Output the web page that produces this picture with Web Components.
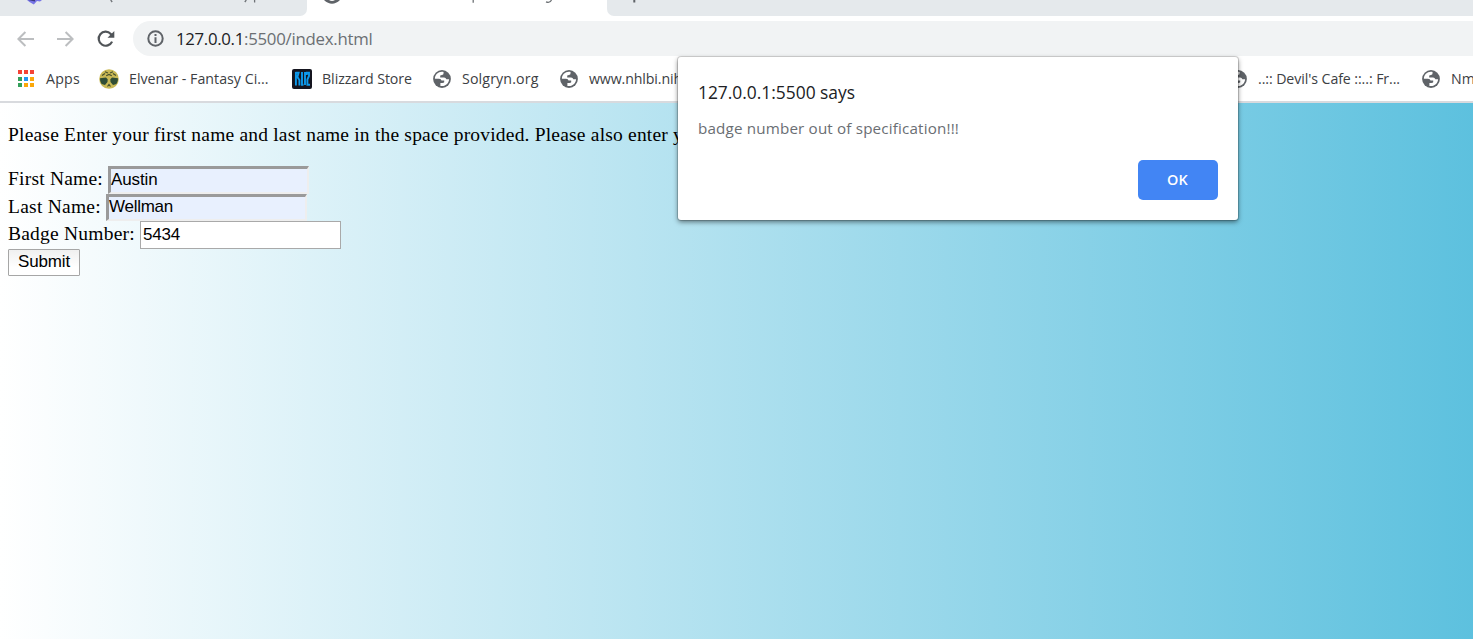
<!DOCTYPE html>
<html lang="en">
<head>
<meta charset="utf-8">
<title>Badge form</title>
<style>
html,body{margin:0;height:100%;overflow:hidden}
body{font-family:"Open Sans","Noto Sans",sans-serif;color:#3c4043}
</style>
</head>
<body>
<browser-window></browser-window>
<script>
const define = (name, html, after) => customElements.define(name, class extends HTMLElement {
  connectedCallback() {
    if (this.shadowRoot) return;
    this.attachShadow({mode: 'open'}).innerHTML = html;
    if (after) after(this, this.shadowRoot);
  }
});

/* Text run that spreads its letters to occupy the given width. */
define('fit-text', `<style>:host{display:inline-block;white-space:pre;flex:none}span{display:inline-block}</style><span><slot></slot></span>`, (el, root) => {
  const span = root.querySelector('span');
  const want = parseFloat(el.getAttribute('width'));
  const n = el.textContent.length;
  const have = span.getBoundingClientRect().width;
  if (want && have) span.style.letterSpacing = ((want - have) / n) + 'px';
});

define('globe-icon', `<style>:host{display:block;width:18px;height:18px;flex:none}svg{display:block}</style>
<svg width="18" height="18" viewBox="0 0 18 18"><circle cx="9" cy="9" r="8.9" fill="#5f6368"/><path d="M10.6 1.9 C6 .8 1.9 4.3 1.9 8.7 L6 8.7 Q8.3 8.8 8.5 10.4 L11.2 10.4 L11.2 12.2 Q11 13 9.2 13 L7.4 13 L7.4 15.9 C12.2 17 16 13.3 16.1 9.3 L13.4 9.3 Q12.8 7.5 10.8 7.6 L7.2 7.6 L7.2 5.8 Q7.3 4.9 9.1 4.9 L10.4 4.3 Z" fill="#fff"/></svg>`);

define('apps-icon', `<style>:host{display:block;width:17px;height:18px}svg{display:block}</style>
<svg width="17" height="18" viewBox="0 0 17 18"><g fill="#f44336"><rect width="4" height="4" x="1" y="0"/><rect x="7" width="4" height="4"/><rect x="13" width="4" height="4"/></g><rect x="1" y="7" width="4" height="4" fill="#34a05a"/><rect x="7" y="7" width="4" height="4" fill="#2196f3"/><rect x="13" y="7" width="4" height="4" fill="#fba80a"/><rect x="1" y="13" width="4" height="4" fill="#34a05a"/><rect x="7" y="13" width="4" height="4" fill="#fba80a"/><rect x="13" y="13" width="4" height="4" fill="#fba80a"/></svg>`);

define('tree-icon', `<style>:host{display:block;width:20px;height:20px}svg{display:block}</style>
<svg width="20" height="20" viewBox="0 0 20 20"><circle cx="10" cy="10" r="9.8" fill="#c9b955"/><path d="M1 9.3 L7 8.6 L8.7 10.2 L8.5 13 L6 16 L2.6 15 Q.7 12.5 1 9.3Z M19 9.3 L13 8.6 L11.3 10.2 L11.5 13 L14 16 L17.4 15 Q19.3 12.5 19 9.3Z" fill="#304e35"/><path d="M3 6.5 L6 4.5 M6 2.8 L9 4 M11 4 L14 2.8 M14 4.5 L17 6.5 M7.2 6.7 L10 5.5 L12.8 6.7 M8.5 17.5 L10 15.5 L11.5 17.5" stroke="#46502c" stroke-width="1.2" fill="none"/></svg>`);

define('store-icon', `<style>:host{display:block;width:20px;height:20px}svg{display:block}</style>
<svg width="20" height="20" viewBox="0 0 20 20"><rect width="20" height="20" rx="2" fill="#15151f"/><path d="M3.9 3 V16.5 M3.5 3.8 H6.6 L5.4 8 L7.4 11 V16.5 M10 3 V15.7 H11.5 M13 3 V16 M14.8 6 V3.8 H17 V7 L15.4 10.5 V15.7 H18" stroke="#0d99ec" stroke-width="1.9" fill="none"/></svg>`);

define('tab-strip', `<style>
:host{display:grid;grid-template-columns:307px 300px 1fr;height:16px;background:#fff;overflow:hidden}
div{background:#e5e9ec;height:16px}
.a{border-bottom-right-radius:7px}.b{background:#fff}.c{border-bottom-left-radius:7px}
svg{display:block}</style>
<div class="a"><svg width="307" height="16"><path d="M27 0H42L40 1.5L37 1L33.8 4.5L29.5 2Z" fill="#7775e6"/><path d="M28 0H35V1.5Z" fill="#3b387f"/><path d="M110.7 0L112.2 2M244.8 2L246.3 0M254.6 0V2.6" stroke="#6e7276" stroke-width="1.3"/></svg></div>
<div class="b"><svg width="300" height="16"><path d="M17 0Q25 7.5 33 0" fill="#5f6368"/><path d="M22 0Q25 2 28 0" fill="#fff"/><path d="M166.2 0V2.8M239 1.8Q243 3.4 244.5 0" stroke="#6e7276" stroke-width="1.3" fill="none"/></svg></div>
<div class="c"><svg width="100" height="16"><path d="M27.3 0V2.5" stroke="#5f6368" stroke-width="2"/></svg></div>`);

define('address-row', `<style>
:host{display:flex;align-items:center;height:45px;background:#fff}
.nav{display:flex;align-items:center;width:133px;flex:none;padding-left:17px;box-sizing:border-box}
svg{display:block;flex:none}
.bar{flex:1;height:35px;border-radius:18px 0 0 18px;background:#f1f3f4;display:flex;align-items:center;padding-left:14px;box-sizing:border-box;font-size:16.8px;line-height:24px}
.host{margin-left:12px;color:#202124}.path{color:#6b6f73}
</style>
<div class="nav">
<svg width="17" height="16" viewBox="0 0 17 16" fill="none" stroke="#bcbec0" stroke-width="2"><path d="M17 8H2M8.4 1L1.4 8L8.4 15"/></svg>
<svg style="margin-left:23px" width="17" height="16" viewBox="0 0 17 16" fill="none" stroke="#bcbec0" stroke-width="2"><path d="M0 8H15M8.6 1L15.6 8L8.6 15"/></svg>
<svg style="margin-left:23px" width="18" height="18" viewBox="0 0 18 18"><path d="M15.1 11.6A7 7 0 1 1 13.8 3.9L15 5.2" fill="none" stroke="#505458" stroke-width="2.2"/><path d="M17.3 1V7.8H10.5Z" fill="#505458"/></svg>
</div>
<div class="bar"><svg width="17" height="17" viewBox="0 0 17 17"><circle cx="8.5" cy="8.5" r="7.2" fill="none" stroke="#5f6368" stroke-width="2"/><path d="M8.5 4V6M8.5 7.3V13" stroke="#5f6368" stroke-width="2"/></svg>
<fit-text class="host" width="68">127.0.0.1</fit-text><fit-text class="path" width="128.5">:5500/index.html</fit-text></div>`);

define('bookmark-link', `<style>:host{display:flex;align-items:center;flex:none;font-size:14.2px;line-height:20px;height:20px}</style><slot name="icon"></slot><slot></slot>`);

define('bookmarks-bar', `<style>
:host{display:flex;align-items:center;height:40px;box-sizing:border-box;padding:0 0 6px 17px;background:#fff;border-bottom:2px solid #d8dade;overflow:hidden}
fit-text{margin-left:10px}
</style>
<bookmark-link style="width:82px"><apps-icon slot="icon"></apps-icon><fit-text style="margin-left:12px" width="34">Apps</fit-text></bookmark-link>
<bookmark-link style="width:193px"><tree-icon slot="icon"></tree-icon><fit-text width="139.5">Elvenar - Fantasy Ci...</fit-text></bookmark-link>
<bookmark-link style="width:141px"><store-icon slot="icon"></store-icon><fit-text width="90">Blizzard Store</fit-text></bookmark-link>
<bookmark-link style="width:127px"><globe-icon slot="icon"></globe-icon><fit-text style="margin-left:11px" width="76.5">Solgryn.org</fit-text></bookmark-link>
<bookmark-link style="width:669px"><globe-icon slot="icon"></globe-icon><fit-text style="margin-left:11px" width="93">www.nhlbi.nih</fit-text></bookmark-link>
<bookmark-link style="width:193px"><globe-icon slot="icon"></globe-icon><fit-text style="margin-left:11px" width="142">..:: Devil's Cafe ::..: Fr...</fit-text></bookmark-link>
<bookmark-link><globe-icon slot="icon"></globe-icon><fit-text style="margin-left:11px" width="24">Nm</fit-text></bookmark-link>`);

define('form-field', `<style>
:host{display:flex;height:28px;line-height:25px;color:#000}
.label{flex:none}
.box{width:201px;height:100%;box-sizing:border-box;background:#e8f0fe;border:3px solid;border-color:#9a9a9a #eee #eee #9a9a9a;border-bottom-width:2px;border-right-width:2px;font:17px/var(--value-line,20px) "Liberation Sans",Arial,sans-serif}
:host([plain]) .box{background:#fff;border:1px solid #a9a9a9;padding:2px 0 0 2px;line-height:21px}
</style><div class="label"><slot name="label"></slot></div><div class="box"><slot></slot></div>`);

define('submit-button', `<style>:host{display:block;box-sizing:border-box;width:72px;height:27px;border:1px solid #a6a6a6;border-radius:1px;background:linear-gradient(#f0f0f0,#fff 70%);font:17px/23px "Liberation Sans",Arial,sans-serif;color:#000;padding-left:9px}</style><slot></slot>`);

define('badge-page', `<style>
:host{display:block;flex:1;background:linear-gradient(to right,#fff,#5bc0de 1490px);padding:20px 8px 0;box-sizing:border-box;font-family:"Liberation Serif","Times New Roman",serif;font-size:19.5px;color:#000;overflow:hidden}
p{margin:0 0 20px;line-height:24px;height:23px;white-space:nowrap}
</style>
<p><fit-text width="675">Please Enter your first name and last name in the space provided. Please also enter y</fit-text></p>
<form-field style="--value-line:22px"><fit-text slot="label" width="100">First Name: </fit-text><fit-text width="46.5">Austin</fit-text></form-field>
<form-field style="height:27px"><fit-text slot="label" width="98">Last Name: </fit-text><fit-text width="64">Wellman</fit-text></form-field>
<form-field plain><fit-text slot="label" width="132">Badge Number: </fit-text><fit-text width="37">5434</fit-text></form-field>
<submit-button><fit-text width="52">Submit</fit-text></submit-button>`);

define('alert-dialog', `<style>
:host{position:absolute;left:678px;top:57px;width:560px;height:163px;box-sizing:border-box;display:flex;flex-direction:column;background:#fff;border-radius:3px;padding:23px 20px 20px;box-shadow:0 0 0 1px rgba(0,0,0,.15),0 2px 5px rgba(0,0,0,.5)}
.title{font-size:17.4px;line-height:24px;color:#202124;height:24px}
.body{font-size:15.2px;line-height:22px;color:#6a6e73;margin-top:13px}
.ok{margin:auto 0 0 auto;width:80px;height:40px;border-radius:5px;background:#4285f4;color:#fff;font-size:14.4px;font-weight:600;display:flex;align-items:center;justify-content:center;box-sizing:border-box;padding:0 1px 2px 0}
</style>
<div class="title"><fit-text width="157">127.0.0.1:5500 says</fit-text></div>
<div class="body"><fit-text width="261">badge number out of specification!!!</fit-text></div>
<div class="ok"><fit-text width="21">OK</fit-text></div>`);

define('browser-window', `<style>:host{display:flex;flex-direction:column;width:1473px;height:639px;position:relative;overflow:hidden;background:#fff}</style>
<tab-strip></tab-strip><address-row></address-row><bookmarks-bar style="margin-top:2px"></bookmarks-bar><badge-page></badge-page><alert-dialog></alert-dialog>`);
</script>
</body>
</html>
